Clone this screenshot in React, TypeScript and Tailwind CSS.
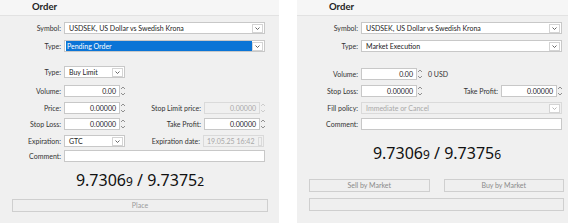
import React from "react";

const font = { fontFamily: "Lato, 'Noto Sans', sans-serif" };

function Chevron({ disabled = false }: { disabled?: boolean }) {
  return (
    <div className="ml-auto mr-[1px] flex h-[9px] w-[11px] shrink-0 items-center justify-center border border-[#d4d4d4] bg-white">
      <svg width="5" height="3" viewBox="0 0 5 3">
        <path d="M0.5 0.5 L2.5 2.5 L4.5 0.5" fill="none" stroke={disabled ? "#b0b0b0" : "#555"} strokeWidth="0.9" />
      </svg>
    </div>
  );
}

function Spinner({ disabled = false }: { disabled?: boolean }) {
  const c = disabled ? "#c4c4c4" : "#777";
  return (
    <svg width="6" height="12" viewBox="0 0 6 12" className="shrink-0">
      <path d="M1 4 L3 2 L5 4" fill="none" stroke={c} strokeWidth="0.8" />
      <path d="M1 8 L3 10 L5 8" fill="none" stroke={c} strokeWidth="0.8" />
    </svg>
  );
}

function Label({ children, className = "w-[64px]" }: { children: React.ReactNode; className?: string }) {
  return <div className={`${className} shrink-0 pr-[3px] text-right text-[#333]`}>{children}</div>;
}

function Select({
  value,
  className,
  highlight = false,
  disabled = false,
}: {
  value: string;
  className: string;
  highlight?: boolean;
  disabled?: boolean;
}) {
  return (
    <div
      className={`${className} flex h-[12px] items-center border ${
        disabled ? "border-[#dadada] bg-[#f0f0f0] text-[#a8a8a8]" : "border-[#c8c8c8] bg-white text-[#222]"
      }`}
    >
      {highlight ? (
        <div className="ml-[1px] flex h-[10px] flex-1 items-center bg-[#0a74d6] pl-[1px] text-white">{value}</div>
      ) : (
        <div className="pl-[4px]">{value}</div>
      )}
      <Chevron disabled={disabled} />
    </div>
  );
}

function NumInput({ value, disabled = false }: { value: string; disabled?: boolean }) {
  return (
    <div className="flex items-center">
      <div
        className={`flex h-[12px] w-[56px] items-center justify-end border pr-[3px] ${
          disabled ? "border-[#dadada] bg-[#f0f0f0] text-[#a8a8a8]" : "border-[#c8c8c8] bg-white text-[#222]"
        }`}
      >
        {value}
      </div>
      <Spinner disabled={disabled} />
    </div>
  );
}

function Header() {
  return (
    <div className="flex h-[16px] items-center border-b border-[#e2e2e2] bg-[#f6f6f6] pl-[32px] text-[9.5px] font-bold text-[#222]">
      Order
    </div>
  );
}

function Price({ bid, bidSmall, ask, askSmall }: { bid: string; bidSmall: string; ask: string; askSmall: string }) {
  return (
    <div
      className="ml-[12px] flex h-[16px] w-[256px] justify-center text-[16px] leading-none text-[#111]"
      style={{ fontFamily: "'Noto Sans', sans-serif" }}
    >
      <span>
        {bid}
        <span className="text-[12px]">{bidSmall}</span> / {ask}
        <span className="text-[12px]">{askSmall}</span>
      </span>
    </div>
  );
}

function PendingPanel() {
  return (
    <div className="flex h-[223px] w-[279px] shrink-0 flex-col bg-[#f0f0f0] text-[7px]" style={font}>
      <Header />
      <div className="mt-[6px] flex h-[12px] items-center">
        <Label>Symbol:</Label>
        <Select value="USDSEK, US Dollar vs Swedish Krona" className="w-[201px]" />
      </div>
      <div className="mt-[6px] flex h-[12px] items-center">
        <Label>Type:</Label>
        <Select value="Pending Order" className="w-[201px]" highlight />
      </div>
      <div className="mt-[14px] flex h-[12px] items-center">
        <Label>Type:</Label>
        <Select value="Buy Limit" className="w-[61px]" />
      </div>
      <div className="mt-[7px] flex h-[12px] items-center">
        <Label>Volume:</Label>
        <NumInput value="0.00" />
      </div>
      <div className="mt-[5px] flex h-[12px] items-center">
        <Label>Price:</Label>
        <NumInput value="0.00000" />
        <Label className="w-[78px]">Stop Limit price:</Label>
        <NumInput value="0.00000" disabled />
      </div>
      <div className="mt-[4px] flex h-[12px] items-center">
        <Label>Stop Loss:</Label>
        <NumInput value="0.00000" />
        <Label className="w-[78px]">Take Profit:</Label>
        <NumInput value="0.00000" />
      </div>
      <div className="mt-[5px] flex h-[12px] items-center">
        <Label>Expiration:</Label>
        <Select value="GTC" className="w-[61px]" />
        <Label className="w-[78px]">Expiration date:</Label>
        <div className="flex h-[12px] w-[61px] items-center border border-[#dadada] bg-[#f0f0f0] pl-[3px] text-[#a8a8a8]">
          19.05.25 16:42
          <div className="ml-auto mr-[1px] h-[9px] w-[4px] border border-[#dadada]" />
        </div>
      </div>
      <div className="mt-[3px] flex h-[12px] items-center">
        <Label>Comment:</Label>
        <div className="h-[12px] w-[201px] border border-[#c8c8c8] bg-white" />
      </div>
      <div className="mt-[10px]">
        <Price bid="9.7306" bidSmall="9" ask="9.7375" askSmall="2" />
      </div>
      <div className="ml-[12px] mt-[11px] flex h-[13px] w-[256px] items-center justify-center border border-[#cfcfcf] bg-[#efefef] text-[#9a9a9a]">
        Place
      </div>
    </div>
  );
}

function MarketPanel() {
  return (
    <div className="flex h-[223px] w-[271px] shrink-0 flex-col bg-[#f0f0f0] text-[7px]" style={font}>
      <Header />
      <div className="mt-[6px] flex h-[12px] items-center">
        <Label>Symbol:</Label>
        <Select value="USDSEK, US Dollar vs Swedish Krona" className="w-[201px]" />
      </div>
      <div className="mt-[6px] flex h-[12px] items-center">
        <Label>Type:</Label>
        <Select value="Market Execution" className="w-[201px]" />
      </div>
      <div className="mt-[16px] flex h-[12px] items-center">
        <Label>Volume:</Label>
        <NumInput value="0.00" />
        <div className="pl-[5px] text-[#333]">0 USD</div>
      </div>
      <div className="mt-[5px] flex h-[12px] items-center">
        <Label>Stop Loss:</Label>
        <NumInput value="0.00000" />
        <Label className="w-[78px]">Take Profit:</Label>
        <NumInput value="0.00000" />
      </div>
      <div className="mt-[5px] flex h-[12px] items-center">
        <Label>Fill policy:</Label>
        <Select value="Immediate or Cancel" className="w-[201px]" disabled />
      </div>
      <div className="mt-[4px] flex h-[12px] items-center">
        <Label>Comment:</Label>
        <div className="h-[12px] w-[201px] border border-[#c8c8c8] bg-white" />
      </div>
      <div className="mt-[15px]">
        <Price bid="9.7306" bidSmall="9" ask="9.7375" askSmall="6" />
      </div>
      <div className="ml-[12px] mt-[18px] flex w-[255px] gap-[14px]">
        <div className="flex h-[13px] flex-1 items-center justify-center border border-[#cfcfcf] bg-[#efefef] text-[#8a8a8a]">
          Sell by Market
        </div>
        <div className="flex h-[13px] flex-1 items-center justify-center border border-[#cfcfcf] bg-[#efefef] text-[#8a8a8a]">
          Buy by Market
        </div>
      </div>
      <div className="ml-[12px] mt-[6px] h-[13px] w-[255px] border border-[#cfcfcf] bg-[#efefef]" />
    </div>
  );
}

export default function App() {
  return (
    <div className="flex h-[223px] w-[577px] gap-[18px] overflow-hidden bg-white">
      <PendingPanel />
      <MarketPanel />
    </div>
  );
}
